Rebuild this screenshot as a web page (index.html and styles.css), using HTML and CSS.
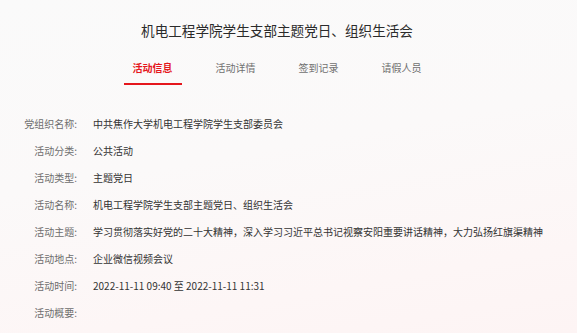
FILE: index.html
```html
<!DOCTYPE html>
<html lang="zh-CN">
<head>
    <meta charset="UTF-8">
    <meta name="viewport" content="width=device-width, initial-scale=1.0">
    <title>活动信息</title>
    <link rel="stylesheet" href="styles.css">
</head>
<body>
    <div class="page">
        <h1 class="title">机电工程学院学生支部主题党日、组织生活会</h1>

        <div class="tabs">
            <div class="tab active">活动信息</div>
            <div class="tab">活动详情</div>
            <div class="tab">签到记录</div>
            <div class="tab">请假人员</div>
        </div>

        <div class="info">
            <div class="row">
                <span class="label">党组织名称:</span>
                <span class="value">中共焦作大学机电工程学院学生支部委员会</span>
            </div>
            <div class="row">
                <span class="label">活动分类:</span>
                <span class="value">公共活动</span>
            </div>
            <div class="row">
                <span class="label">活动类型:</span>
                <span class="value">主题党日</span>
            </div>
            <div class="row">
                <span class="label">活动名称:</span>
                <span class="value">机电工程学院学生支部主题党日、组织生活会</span>
            </div>
            <div class="row">
                <span class="label">活动主题:</span>
                <span class="value">学习贯彻落实好党的二十大精神，深入学习习近平总书记视察安阳重要讲话精神，大力弘扬红旗渠精神</span>
            </div>
            <div class="row">
                <span class="label">活动地点:</span>
                <span class="value">企业微信视频会议</span>
            </div>
            <div class="row">
                <span class="label">活动时间:</span>
                <span class="value">2022-11-11 09:40 至 2022-11-11 11:31</span>
            </div>
            <div class="row">
                <span class="label">活动概要:</span>
                <span class="value"></span>
            </div>
        </div>
    </div>
</body>
</html>
```

FILE: styles.css
```css
body {
    margin: 0;
    padding: 0;
    font-family: "Noto Sans CJK SC", "Noto Sans", sans-serif;
    background: linear-gradient(170deg, #fafafa 0%, #fbf9f9 45%, #fdf6f6 80%, #fdf4f4 100%);
    height: 100vh;
    overflow: hidden;
}

.page {
    width: 554px;
}

.title {
    margin: 0;
    padding-top: 20px;
    font-size: 13.6px;
    line-height: 20px;
    font-weight: normal;
    color: #2b2b2b;
    text-align: center;
}

.tabs {
    display: flex;
    justify-content: center;
    gap: 25px;
    margin-top: 21px;
}

.tab {
    width: 58px;
    text-align: center;
    font-size: 10px;
    line-height: 14px;
    color: #707070;
    padding-bottom: 8px;
    border-bottom: 2px solid transparent;
}

.tab.active {
    color: #e5161c;
    font-weight: bold;
    border-bottom-color: #e5161c;
}

.info {
    margin-top: 25px;
}

.row {
    display: flex;
    gap: 16px;
    height: 27px;
    line-height: 27px;
    font-size: 10px;
}

.label {
    width: 77px;
    flex-shrink: 0;
    text-align: right;
    color: #6e6e6e;
}

.value {
    color: #333;
    white-space: nowrap;
}
```
